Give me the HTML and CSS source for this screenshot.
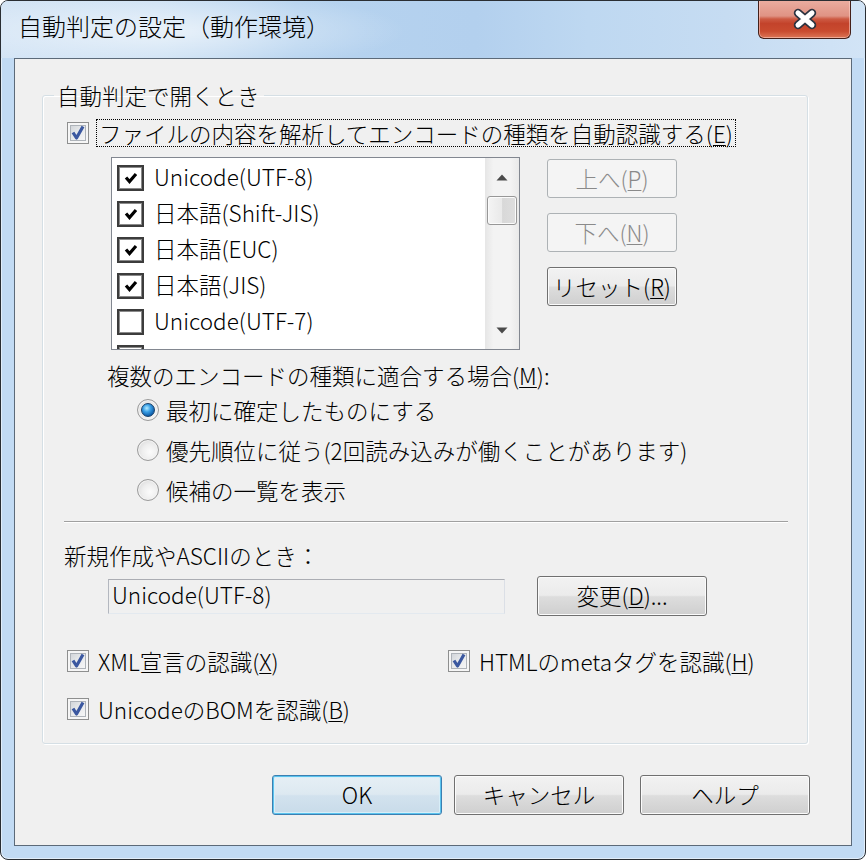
FILE: index.html
```html
<!DOCTYPE html>
<html lang="ja">
<head>
<meta charset="utf-8">
<title>自動判定の設定（動作環境）</title>
<link rel="stylesheet" href="styles.css">
</head>
<body>
<div class="window">
  <div class="titlebar">
    <div class="title">自動判定の設定（動作環境）</div>
    <div class="close">
      <svg width="30" height="24" viewBox="0 0 30 24">
        <path d="M8 6 L22 18 M22 6 L8 18" stroke="#2c3340" stroke-width="8.5" stroke-linecap="round" fill="none"/>
        <path d="M8 6 L22 18 M22 6 L8 18" stroke="#ffffff" stroke-width="5" stroke-linecap="round" fill="none"/>
      </svg>
    </div>
  </div>
  <div class="client">
    <fieldset class="group">
      <legend>自動判定で開くとき</legend>
      <div class="r1">
        <span class="cb"><svg width="20" height="20" viewBox="0 0 20 20"><path d="M5 9.5 L8.5 15 L15 3.5" stroke="#3b58a0" stroke-width="3.2" fill="none" stroke-linejoin="round"/></svg></span>
        <span class="focus">ファイルの内容を解析してエンコードの種類を自動認識する(<u>E</u>)</span>
      </div>
      <div class="list-area">
        <div class="listbox">
          <div class="items">
            <div class="item"><span class="ccb"><svg width="16" height="16" viewBox="0 0 16 16"><path d="M3 7.5 L6.5 11.5 L13 4" stroke="#000" stroke-width="3.2" fill="none"/></svg></span><span class="t">Unicode(UTF-8)</span></div>
            <div class="item"><span class="ccb"><svg width="16" height="16" viewBox="0 0 16 16"><path d="M3 7.5 L6.5 11.5 L13 4" stroke="#000" stroke-width="3.2" fill="none"/></svg></span><span class="t">日本語(Shift-JIS)</span></div>
            <div class="item"><span class="ccb"><svg width="16" height="16" viewBox="0 0 16 16"><path d="M3 7.5 L6.5 11.5 L13 4" stroke="#000" stroke-width="3.2" fill="none"/></svg></span><span class="t">日本語(EUC)</span></div>
            <div class="item"><span class="ccb"><svg width="16" height="16" viewBox="0 0 16 16"><path d="M3 7.5 L6.5 11.5 L13 4" stroke="#000" stroke-width="3.2" fill="none"/></svg></span><span class="t">日本語(JIS)</span></div>
            <div class="item"><span class="ccb"></span><span class="t">Unicode(UTF-7)</span></div>
            <div class="item"><span class="ccb"></span></div>
          </div>
          <div class="vscroll">
            <div class="arrow"><svg width="12" height="7" viewBox="0 0 12 7"><path d="M6 0.5 L11.5 6.5 L0.5 6.5 Z" fill="#4a4a4a"/></svg></div>
            <div class="thumb"></div>
            <div class="track"></div>
            <div class="arrow"><svg width="12" height="7" viewBox="0 0 12 7"><path d="M0.5 0.5 L11.5 0.5 L6 6.5 Z" fill="#4a4a4a"/></svg></div>
          </div>
        </div>
        <div class="side">
          <button class="btn disabled">上へ(<u>P</u>)</button>
          <button class="btn disabled">下へ(<u>N</u>)</button>
          <button class="btn">リセット(<u>R</u>)</button>
        </div>
      </div>
      <div class="multi">複数のエンコードの種類に適合する場合(<u>M</u>):</div>
      <div class="radio-row"><span class="rb on"></span><span class="rl">最初に確定したものにする</span></div>
      <div class="radio-row"><span class="rb"></span><span class="rl">優先順位に従う(2回読み込みが働くことがあります)</span></div>
      <div class="radio-row"><span class="rb"></span><span class="rl">候補の一覧を表示</span></div>
      <div class="sep"></div>
      <div class="newlabel">新規作成やASCIIのとき：</div>
      <div class="enc-row">
        <div class="field">Unicode(UTF-8)</div>
        <button class="btn change">変更(<u>D</u>)...</button>
      </div>
      <div class="opts">
        <div class="opt"><span class="cb"><svg width="20" height="20" viewBox="0 0 20 20"><path d="M5 9.5 L8.5 15 L15 3.5" stroke="#3b58a0" stroke-width="3.2" fill="none" stroke-linejoin="round"/></svg></span><span class="ol">XML宣言の認識(<u>X</u>)</span></div>
        <div class="opt"><span class="cb"><svg width="20" height="20" viewBox="0 0 20 20"><path d="M5 9.5 L8.5 15 L15 3.5" stroke="#3b58a0" stroke-width="3.2" fill="none" stroke-linejoin="round"/></svg></span><span class="ol">HTMLのmetaタグを認識(<u>H</u>)</span></div>
        <div class="opt"><span class="cb"><svg width="20" height="20" viewBox="0 0 20 20"><path d="M5 9.5 L8.5 15 L15 3.5" stroke="#3b58a0" stroke-width="3.2" fill="none" stroke-linejoin="round"/></svg></span><span class="ol">UnicodeのBOMを認識(<u>B</u>)</span></div>
      </div>
    </fieldset>
    <div class="dlg-buttons">
      <button class="btn big default">OK</button>
      <button class="btn big cancel">キャンセル</button>
      <button class="btn big">ヘルプ</button>
    </div>
  </div>
</div>
</body>
</html>
```

FILE: styles.css
```css
* { box-sizing: border-box; }
html, body { margin: 0; padding: 0; }
body {
  background: #ffffff;
  font-family: "Noto Sans CJK JP", "Noto Sans", sans-serif;
  font-size: 22.5px;
  font-weight: 300;
  color: #000;
}
u { text-decoration: underline; text-underline-offset: 2px; text-decoration-thickness: 1px; }

.window {
  width: 866px;
  height: 860px;
  border: 1px solid #2a2e33;
  border-radius: 8px;
  background: #c2dbf4;
  box-shadow: inset 0 0 0 1px #e2eefa;
  display: flex;
  flex-direction: column;
  overflow: hidden;
}

.titlebar {
  height: 57px;
  flex: none;
  display: flex;
  align-items: flex-start;
  background:
    radial-gradient(ellipse 240px 40px at 165px 30px, rgba(255,255,255,0.6), rgba(255,255,255,0) 100%),
    linear-gradient(to right, #d3e4f5 0%, #cadff3 18%, #b6d3ef 34%, #b3d0ee 55%, #bed8f1 68%, #c6dcf2 84%, #d2e4f6 100%);
}
.title {
  padding-left: 17px;
  margin-top: 11px;
  font-size: 24px;
  line-height: 28px;
  white-space: nowrap;
}
.close {
  margin-left: auto;
  margin-right: 14px;
  margin-top: -1px;
  width: 93px;
  height: 39px;
  border: 1px solid #44201a;
  border-top: none;
  border-radius: 0 0 6px 6px;
  background: linear-gradient(#ebaea1 0%, #e09384 42%, #cd5a43 50%, #c3432b 62%, #c94b2f 82%, #dc7656 100%);
  box-shadow: inset 0 0 0 1px rgba(255, 214, 204, 0.55);
  display: flex;
  align-items: center;
  justify-content: center;
}

.client {
  flex: 1;
  margin: 0 13px 13px 13px;
  border: 1px solid #5c6a79;
  background: #f0f0f0;
  padding: 23px 41px 0 27px;
}

.group {
  width: 766px;
  margin: 0;
  padding: 0 0 20px 0;
  border: 1px solid #d5dfe5;
  border-radius: 3px;
  box-shadow: inset 1px 1px 0 #ffffff, 1px 1px 0 #ffffff;
  min-inline-size: 0;
}
.group legend {
  margin-left: 11px;
  padding: 0 4px 0 3px;
  line-height: 26px;
}

.r1 {
  display: flex;
  align-items: center;
  height: 28px;
  margin: 11px 0 0 24px;
}
.focus {
  margin-left: 7px;
  border: 1px dotted #000;
  padding: 0 2px;
  line-height: 26px;
  white-space: nowrap;
}

.cb {
  flex: none;
  width: 22px;
  height: 22px;
  border: 1px solid #8e8f8f;
  background: linear-gradient(135deg, #c9cdd3 0%, #e6e8ea 45%, #fbfbfb 100%);
  box-shadow: inset 0 0 0 2px #f6f6f6, inset 0 0 0 3px #aeb3b9;
  display: flex;
  align-items: center;
  justify-content: center;
}

.list-area {
  display: flex;
  align-items: flex-start;
  margin: 10px 0 0 68px;
}
.listbox {
  width: 409px;
  height: 193px;
  border: 1px solid #828790;
  background: #fff;
  display: flex;
  overflow: hidden;
}
.items {
  flex: 1;
  padding-top: 2px;
  overflow: hidden;
}
.item {
  height: 36px;
  flex: none;
  display: flex;
  align-items: center;
  padding-left: 5px;
  white-space: nowrap;
}
.item .t {
  line-height: 28px;
  padding-bottom: 5px;
}
.ccb {
  flex: none;
  width: 27px;
  height: 26px;
  margin-right: 10px;
  border: 2px solid #3c3c3c;
  box-shadow: inset 0 0 0 1px #8a8a8a;
  background: #fff;
  display: flex;
  align-items: center;
  justify-content: center;
}
.vscroll {
  flex: none;
  width: 34px;
  display: flex;
  flex-direction: column;
  background: linear-gradient(to right, #e6e6e6 0%, #f3f3f3 25%, #f3f3f3 75%, #e9e9e9 100%);
}
.arrow {
  height: 38px;
  display: flex;
  align-items: center;
  justify-content: center;
}
.thumb {
  height: 29px;
  margin: 0 2px;
  border: 1px solid #979797;
  border-radius: 3px;
  background: linear-gradient(to right, #f4f4f4 0%, #e9e9e9 50%, #d8d8d8 52%, #dedede 100%);
  box-shadow: inset 0 0 0 1px #fbfbfb;
}
.track { flex: 1; }

.side {
  display: flex;
  flex-direction: column;
  gap: 15px;
  margin: 2px 0 0 27px;
}

.btn {
  font-family: inherit;
  font-size: 22.5px;
  font-weight: 300;
  color: #000;
  width: 130px;
  height: 39px;
  padding: 0 0 2px 0;
  line-height: 34px;
  border: 1px solid #707070;
  border-radius: 3px;
  background: linear-gradient(#f2f2f2 0%, #ebebeb 48%, #dddddd 52%, #cfcfcf 100%);
  box-shadow: inset 0 0 0 1px #fbfbfb;
  white-space: nowrap;
}
.btn.disabled {
  color: #8a8a8a;
  border-color: #adb2b5;
  background: #f4f4f4;
  box-shadow: none;
}

.multi {
  margin: 12px 0 0 64px;
  line-height: 26px;
  padding-bottom: 2px;
  white-space: nowrap;
}
.radio-row {
  height: 40px;
  display: flex;
  align-items: center;
  margin-left: 94px;
  white-space: nowrap;
}
.rl { margin-left: 7px; }
.rb {
  flex: none;
  width: 22px;
  height: 22px;
  border-radius: 50%;
  border: 1px solid #9a9a9a;
  background: radial-gradient(circle at 60% 60%, #fbfbfb 0%, #eeeeee 45%, #d2d2d2 100%);
  box-shadow: inset 0 0 0 1px #f3f3f3;
  display: flex;
  align-items: center;
  justify-content: center;
}
.rb.on::after {
  content: "";
  width: 12px;
  height: 12px;
  border-radius: 50%;
  border: 1px solid #17406a;
  background: radial-gradient(circle at 40% 35%, #b6ecff 0%, #3aa0e6 35%, #0d5aa6 75%, #0a3e78 100%);
}

.sep {
  margin: 11px 19px 0 21px;
  height: 2px;
  border-top: 1px solid #a0a0a0;
  border-bottom: 1px solid #ffffff;
}
.newlabel {
  margin: 18px 0 0 21px;
  line-height: 28px;
  white-space: nowrap;
}
.enc-row {
  display: flex;
  align-items: center;
  height: 40px;
  margin: 7px 0 0 65px;
}
.field {
  width: 397px;
  height: 35px;
  border: 1px solid;
  border-color: #abadb3 #dbdfe6 #e3e9ef #b3b7bf;
  background: #f0f0f0;
  padding-left: 3px;
  line-height: 28px;
  white-space: nowrap;
}
.btn.change {
  width: 170px;
  height: 40px;
}
.enc-row .btn.change { margin-left: 32px; }

.opts {
  display: grid;
  grid-template-columns: 381px auto;
  row-gap: 20px;
  margin: 31px 0 0 24px;
}
.opt {
  display: flex;
  align-items: center;
  height: 28px;
  white-space: nowrap;
}
.ol { margin-left: 9px; }

.dlg-buttons {
  display: flex;
  justify-content: flex-end;
  margin-top: 31px;
}
.btn.big {
  width: 170px;
  height: 40px;
}
.btn.default {
  margin-right: 12px;
  border-color: #3c7fb1;
  background: linear-gradient(#e6eff5 0%, #dde9f1 48%, #d2e2ee 52%, #c8dbe9 100%);
  box-shadow: inset 0 0 0 1px #59c3ee, inset 0 0 0 2px #d8eef8;
}
.btn.cancel { margin-right: 16px; }
```
